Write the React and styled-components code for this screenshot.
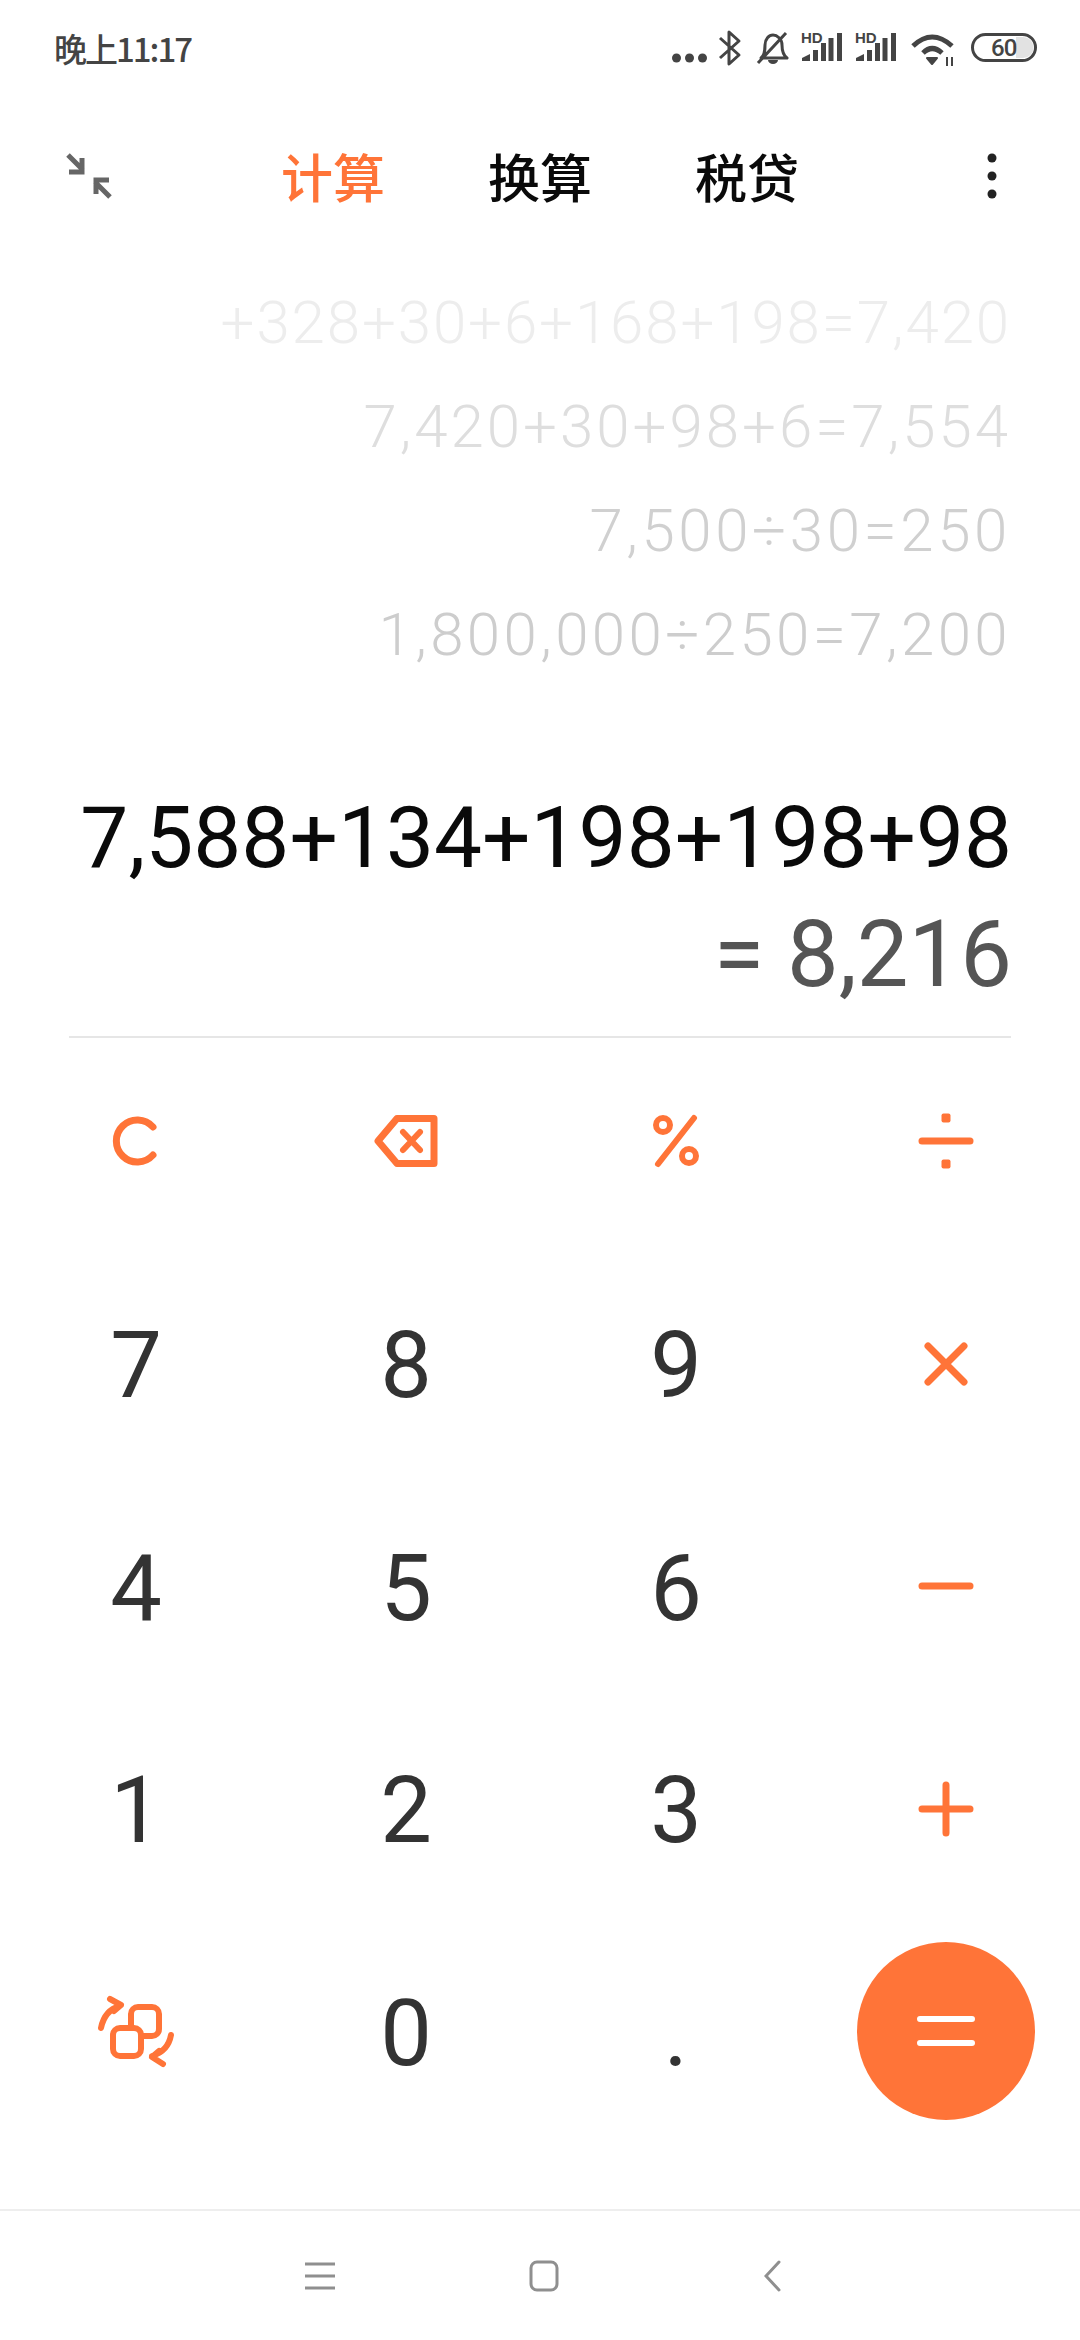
import React from "react";
import styled, { createGlobalStyle } from "styled-components";

const G = createGlobalStyle`
  html, body { margin: 0; padding: 0; background: #fff; }
  body { font-family: "Roboto", "Noto Sans CJK SC", sans-serif; }
`;
const ORANGE = "#ff7438";
const Page = styled.div`
  width: 1080px; height: 2340px; display: flex; flex-direction: column; background: #fff; overflow: hidden;
`;
const Status = styled.div`
  height: 98px; padding: 0 40px 0 54px; display: flex; align-items: center; justify-content: space-between; box-sizing: border-box;
`;
const Time = styled.span`
  font: 500 33px "Noto Sans CJK SC", sans-serif; color: #444; letter-spacing: -2px; position: relative; top: -1px;
`;
const StatusIcons = styled.svg`display: block;`;
const BatteryNum = styled.text`font: 500 24px "Roboto", sans-serif; fill: #444; letter-spacing: -1px;`;
const HdLabel = styled.text`font: 700 15px "Liberation Sans", sans-serif; fill: #444;`;
const TopBar = styled.div`
  height: 156px; padding: 0 82px 0 66px; display: flex; align-items: center; box-sizing: border-box;
`;
const Tabs = styled.div`
  flex: 1; display: flex; justify-content: center; gap: 103px; padding-right: 18px;
`;
const Tab = styled.span`
  font: 500 52px/60px "Noto Sans CJK SC", sans-serif; color: ${p => p.$on ? ORANGE : "#0a0a0a"};
`;
const History = styled.div`
  height: 416px; padding: 17px 69px 0 0; display: flex; flex-direction: column; align-items: flex-end; box-sizing: border-box;
`;
const HLine = styled.div`
  height: 104px; line-height: 104px; font-size: 60px; font-weight: 300; color: ${p => p.$c}; letter-spacing: ${p => p.$ls}px;
`;
const Expr = styled.div`
  text-align: right; padding-right: 68px; font-size: 85.5px; line-height: 110px; color: #0a0a0a; margin-top: 113px;
`;
const Result = styled.div`
  text-align: right; padding-right: 68px; font-size: 92px; line-height: 110px; color: #555; margin-top: 7px; font-weight: 400;
`;
const Rule = styled.div`height: 2px; margin: 26px 69px 0; background: #e6e6e6;`;
const Keys = styled.div`
  display: grid; grid-template-columns: repeat(4, 270px); grid-auto-rows: 222.5px; justify-content: center; margin-top: -8px; padding-left: 2px;
`;
const Key = styled.div`
  display: flex; align-items: center; justify-content: center; font-size: 92px; color: #333; font-weight: 400;
`;
const Digit = styled(Key)`
  padding-top: 4px;
`;
const Eq = styled.div`
  width: 178px; height: 178px; border-radius: 50%; background: ${ORANGE}; display: flex; align-items: center; justify-content: center;
`;
const Nav = styled.div`
  margin-top: auto; height: 131px; border-top: 2px solid #eee; box-sizing: border-box; display: grid; grid-template-columns: 305px 30px 194px 30px 205px 17px; align-items: center;
`;
const NavSpacer = styled.span``;
const Op = ({ children, s = 70 }) => <svg width={s} height={s} viewBox={`0 0 ${s} ${s}`} fill="none" stroke={ORANGE} strokeWidth="7" strokeLinecap="round" strokeLinejoin="round">{children}</svg>;

const Signal = ({ dx = 0 }) => (
  <g transform={`translate(${dx} 0)`}>
    <HdLabel x="129" y="19">HD</HdLabel>
    <path d="M130 37v-3l8-4v7zM141 37V26h5v11zM149 37V19h5v18zM156.5 37V14h5v23zM165 37V9h5v28z" fill="#444" />
  </g>
);

export default function App() {
  return (
    <Page>
      <G />
      <Status>
        <Time>晚上11:17</Time>
        <StatusIcons width="368" height="50" viewBox="0 0 368 50" fill="none">
          <g fill="#444"><circle cx="4.5" cy="34" r="4.5" /><circle cx="17.5" cy="34" r="4.5" /><circle cx="30.5" cy="34" r="4.5" /></g>
          <path d="M48 14l19 17-10 9V8l10 9-19 17" stroke="#444" strokeWidth="3" strokeLinejoin="round" />
          <path d="M89 34c4-3 4-8 4-13 0-6 4-10 8-10s9 4 9 10c0 5 1 10 5 13zM86 39L114 9" stroke="#444" strokeWidth="3" strokeLinejoin="round" />
          <path d="M96 36h10a5 4 0 0 1-10 0z" fill="#444" />
          <Signal />
          <Signal dx={54} />
          <path d="M241 22q19-18 39 0M251 29q9-9 19 0" stroke="#444" strokeWidth="5" />
          <path d="M255 34h10l-5 6z" fill="#444" stroke="#444" strokeWidth="2" strokeLinejoin="round" />
          <path d="M275 33v9M280 33v9" stroke="#444" strokeWidth="2" />
          <rect x="300.5" y="10.5" width="63" height="26" rx="13" stroke="#444" strokeWidth="3" />
          <path d="M344 13h7a10.5 10.5 0 0 1 0 21h-7z" fill="#e2e2e2" />
          <BatteryNum x="319" y="32">60</BatteryNum>
        </StatusIcons>
      </Status>
      <TopBar>
        <svg width="46" height="46" viewBox="0 0 46 46" fill="none" stroke="#666" strokeWidth="5"><path d="M2 2l15 15M16 5v14H3M44 44L29 29M30 41V27h13" /></svg>
        <Tabs><Tab $on>计算</Tab><Tab>换算</Tab><Tab>税贷</Tab></Tabs>
        <svg width="12" height="48" viewBox="0 0 12 48" fill="#222"><circle cx="6" cy="6" r="4.5" /><circle cx="6" cy="24" r="4.5" /><circle cx="6" cy="42" r="4.5" /></svg>
      </TopBar>
      <History>
        <HLine $c="#ededed" $ls={1.9}>+328+30+6+168+198=7,420</HLine>
        <HLine $c="#dedede" $ls={3}>7,420+30+98+6=7,554</HLine>
        <HLine $c="#d0d0d0" $ls={3.6}>7,500÷30=250</HLine>
        <HLine $c="#cdcdcd" $ls={3.4}>1,800,000÷250=7,200</HLine>
      </History>
      <Expr>7,588+134+198+198+98</Expr>
      <Result>= 8,216</Result>
      <Rule />
      <Keys>
        <Key><Op><path d="M52 21A21 21 0 1 0 52 49" /></Op></Key>
        <Key><Op><path d="M26 12.5H63V57.5H26L7 35z" /><path d="M32 26l17 18M49 26L32 44" strokeWidth="6" /></Op></Key>
        <Key><Op><g strokeWidth="6"><path d="M53 12L17 58" /><circle cx="22" cy="19" r="7" /><circle cx="48" cy="50" r="7" /></g></Op></Key>
        <Key><Op><path d="M11 35h48" /><rect x="30.5" y="7.5" width="9" height="9" rx="2" fill={ORANGE} stroke="none" /><rect x="30.5" y="53.5" width="9" height="9" rx="2" fill={ORANGE} stroke="none" /></Op></Key>
        <Digit>7</Digit><Digit>8</Digit><Digit>9</Digit>
        <Key><Op><path d="M17 17l36 36M53 17L17 53" /></Op></Key>
        <Digit>4</Digit><Digit>5</Digit><Digit>6</Digit>
        <Key><Op><path d="M11 35h48" /></Op></Key>
        <Digit>1</Digit><Digit>2</Digit><Digit>3</Digit>
        <Key><Op><path d="M11 35h48M35 11v48" /></Op></Key>
        <Key><Op s={80}><g strokeWidth="6"><rect x="35" y="16" width="28" height="29" rx="7" /><rect x="17" y="37" width="28" height="28" rx="7" fill="#fff" /><path d="M5 37C7 27 13 18 24 15M14 8l11 6-7 6M75 44C73 55 66 62 56 65M67 73l-11-7 7-6" /></g></Op></Key>
        <Digit>0</Digit><Digit>.</Digit>
        <Key><Eq><svg width="60" height="40" viewBox="0 0 60 40" stroke="#fff" strokeWidth="6" strokeLinecap="round"><path d="M4 8h52M4 32h52" /></svg></Eq></Key>
      </Keys>
      <Nav>
        <NavSpacer />
        <svg width="30" height="30" viewBox="0 0 30 30" stroke="#8f8f8f" strokeWidth="3"><path d="M0 3h30M0 15h30M0 27h30" /></svg>
        <NavSpacer />
        <svg width="30" height="32" viewBox="0 0 30 32" fill="none" stroke="#8f8f8f" strokeWidth="3"><rect x="2" y="2" width="26" height="28" rx="6" /></svg>
        <NavSpacer />
        <svg width="17" height="32" viewBox="0 0 17 32" fill="none" stroke="#8f8f8f" strokeWidth="3" strokeLinecap="round"><path d="M15 2L2 16l13 14" /></svg>
      </Nav>
    </Page>
  );
}
